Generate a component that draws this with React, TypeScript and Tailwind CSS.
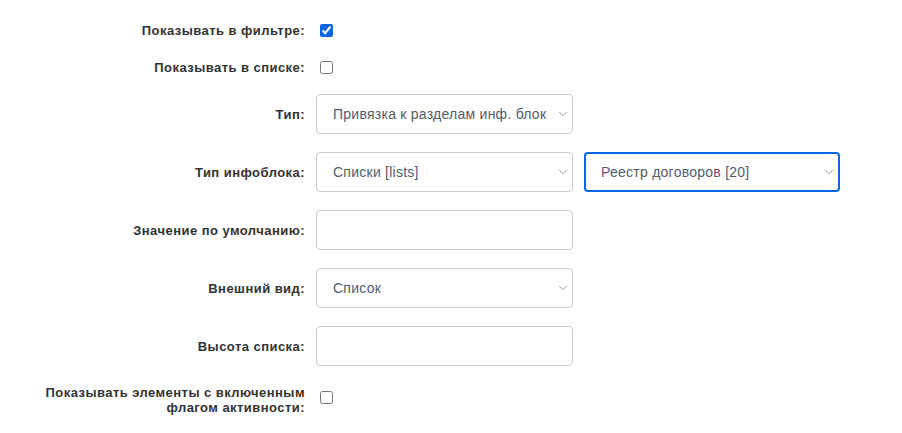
import { ChevronDown } from 'lucide-react';
import type { ReactNode } from 'react';

const font = { fontFamily: '"Liberation Sans", Arial, sans-serif' };

function Row({ label, children, className = '', top = false }: { label: ReactNode; children: ReactNode; className?: string; top?: boolean }) {
  return (
    <div className={`flex gap-[11px] ${top ? 'items-start' : 'items-center'} ${className}`}>
      <div className="w-[305px] shrink-0 text-right text-[13px] font-bold leading-[15px] tracking-[0.45px] text-[#333]">{label}</div>
      <div className="flex items-center gap-[11px]">{children}</div>
    </div>
  );
}

function Select({ value, active = false, width = 'w-[257px]' }: { value: string; active?: boolean; width?: string }) {
  return (
    <div
      className={`relative flex h-10 ${width} items-center overflow-hidden rounded-[4px] bg-white pl-4 ${
        active ? 'border-2 border-[#0b66e4] pl-[15px]' : 'border border-[#c6cdd3]'
      }`}
    >
      <span className="whitespace-nowrap text-[14px] tracking-[0.25px] text-[#535c69]">{value}</span>
      <ChevronDown className="absolute right-[2px] top-1/2 h-[14px] w-[14px] -translate-y-1/2 text-[#80868e]" strokeWidth={1.4} />
    </div>
  );
}

function TextInput() {
  return <div className="h-10 w-[257px] rounded-[4px] border border-[#c6cdd3] bg-white" />;
}

function Check({ checked = false }: { checked?: boolean }) {
  return (
    <input
      type="checkbox"
      defaultChecked={checked}
      className="m-0 ml-1 h-[13px] w-[13px] accent-[#0b66e4]"
    />
  );
}

export default function App() {
  return (
    <div className="min-h-[433px] w-[902px] bg-white pt-5" style={font}>
      <Row label="Показывать в фильтре:" className="h-5">
        <Check checked />
      </Row>
      <Row label="Показывать в списке:" className="mt-[17px] h-5">
        <Check />
      </Row>
      <Row label="Тип:" className="mt-[17px]">
        <Select value="Привязка к разделам инф. блок" />
      </Row>
      <Row label="Тип инфоблока:" className="mt-[18px]">
        <Select value="Списки [lists]" />
        <Select value="Реестр договоров [20]" active width="w-[256px]" />
      </Row>
      <Row label="Значение по умолчанию:" className="mt-[18px]">
        <TextInput />
      </Row>
      <Row label="Внешний вид:" className="mt-[18px]">
        <Select value="Список" />
      </Row>
      <Row label="Высота списка:" className="mt-[18px]">
        <TextInput />
      </Row>
      <Row
        label={
          <>
            Показывать элементы с включенным
            <br />
            флагом активности:
          </>
        }
        className="mt-[19px]"
        top
      >
        <div className="pt-[2px]">
          <Check />
        </div>
      </Row>
    </div>
  );
}
